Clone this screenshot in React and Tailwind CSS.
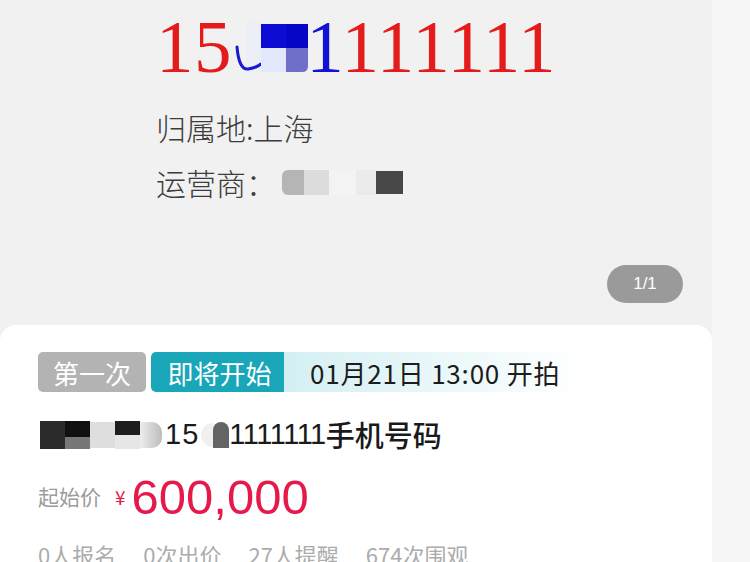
import React from "react";

const cjk = { fontFamily: '"Noto Sans CJK SC", "Noto Sans", sans-serif' };
const serif = { fontFamily: '"Liberation Serif", "Noto Sans CJK SC", serif' };
const sans = { fontFamily: '"Liberation Sans", "Noto Sans CJK SC", sans-serif' };

// blurred digits in the big number
const NumberMosaic = () => (
  <span className="inline-block w-[74px] h-[74px] align-top relative">
    <svg width="78" height="74" viewBox="0 0 78 74" className="absolute left-0 top-0 overflow-visible">
      <rect x="14" y="10" width="15" height="52" fill="#eceff5" />
      <path d="M5 37 Q7 60 16 59 Q24 58 29 54" stroke="#1a1ad0" strokeWidth="3" fill="none" strokeLinecap="round" />
      <rect x="29" y="14" width="25" height="24" fill="#0b0bd3" />
      <rect x="54" y="14" width="22" height="24" fill="#0606c6" />
      <rect x="29" y="38" width="25" height="24" fill="#e3e7fb" />
      <path d="M54 38 H76 V56 Q76 62 70 62 H54 Z" fill="#6f6fc9" />
    </svg>
  </span>
);

const App = () => {
  return (
    <div className="w-[750px] h-[562px] overflow-hidden flex bg-[#f6f6f6]">
      <div className="w-[712px] flex flex-col bg-[#f1f1f1]">
        {/* carousel area */}
        <div className="h-[325px] shrink-0 relative pl-[156px] pt-[10px]">
          <div className="text-[75px] leading-[74px] whitespace-nowrap text-[#e41b1b] tracking-[0.6px]" style={serif}>
            <span>15</span>
            <NumberMosaic />
            <span className="text-[#1212d6]">1</span>
            <span>111111</span>
          </div>

          <div className="mt-[16px] flex flex-col text-[30px] leading-[55px] text-[#3c3c3c] font-light" style={cjk}>
            <div>归属地:上海</div>
            <div className="flex items-center">
              <span>运营商：</span>
              <span className="flex items-center h-[26px] ml-[6px]">
                <span className="w-[22px] h-[25px] bg-[#b5b5b5] rounded-l-[6px]" />
                <span className="w-[25px] h-[25px] bg-[#dcdcdc]" />
                <span className="w-[27px] h-[25px] bg-[#f3f3f3]" />
                <span className="w-[20px] h-[25px] bg-[#ebebeb]" />
                <span className="w-[27px] h-[23px] bg-[#474747]" />
              </span>
            </div>
          </div>

          <div
            className="absolute right-[29px] top-[265px] w-[76px] h-[38px] rounded-full bg-[#9a9a9a] text-white text-[17px] flex items-center justify-center"
            style={sans}
          >
            1/1
          </div>
        </div>

        {/* info card */}
        <div className="flex-1 bg-white rounded-t-[16px] pl-[38px] pt-[27px] flex flex-col" style={cjk}>
          <div className="flex items-center h-[40px] shrink-0">
            <span className="h-[40px] w-[108px] rounded-[5px] bg-[#b3b3b3] text-white text-[26px] flex items-center justify-center">
              第一次
            </span>
            <span className="ml-[5px] h-[40px] w-[137px] rounded-[5px] bg-[#18a6b8] text-white text-[26px] flex items-center justify-center">
              即将开始
            </span>
            <span className="-ml-[4px] h-[40px] w-[300px] pl-[26px] flex items-center text-[26px] tracking-[0.8px] text-[#1c1c1c] bg-gradient-to-r from-[#d3eff3] to-white">
              01月21日 13:00 开拍
            </span>
          </div>

          <div className="mt-[23px] h-[40px] shrink-0 flex items-center text-[29px] font-medium text-[#1a1a1a] whitespace-nowrap">
            <span className="flex items-center h-[28px] ml-[2px]">
              <span className="w-[25px] h-[28px] bg-[#2b2b2b]" />
              <span className="w-[25px] h-[28px] flex flex-col">
                <span className="h-[16px] bg-[#111]" />
                <span className="h-[12px] bg-[#777]" />
              </span>
              <span className="w-[25px] h-[26px] bg-[#dedede]" />
              <span className="w-[25px] h-[28px] flex flex-col">
                <span className="h-[14px] bg-[#1e1e1e]" />
                <span className="h-[14px] bg-[#e6e6e6]" />
              </span>
              <span className="w-[22px] h-[26px] bg-gradient-to-r from-[#ededed] to-[#bdbdbd] rounded-r-[10px]" />
            </span>
            <span className="ml-[3px] tracking-[1px]" style={sans}>15</span>
            <span className="flex items-center h-[26px] ml-[2px]">
              <span className="w-[12px] h-[24px] bg-[#f0f0f0] rounded-l-full" />
              <span className="w-[16px] h-[26px] bg-[#646464] rounded-t-[8px]" />
            </span>
            <span className="tracking-[-0.5px]" style={sans}>1111111</span>
            <span>手机号码</span>
          </div>

          <div className="mt-[14px] h-[56px] shrink-0 flex items-center whitespace-nowrap">
            <span className="text-[21px] text-[#9c9c9c]">起始价</span>
            <span className="ml-[14px] text-[19px] text-[#e5194a]">¥</span>
            <span className="ml-[6px] text-[49px] leading-none text-[#e5194a]" style={sans}>600,000</span>
          </div>

          <div className="mt-[14px] h-[30px] shrink-0 flex items-center gap-[27px] text-[22px] text-[#acacac] whitespace-nowrap">
            <span>0人报名</span>
            <span>0次出价</span>
            <span>27人提醒</span>
            <span>674次围观</span>
          </div>
        </div>
      </div>
      <div className="flex-1" />
    </div>
  );
};

export default App;
